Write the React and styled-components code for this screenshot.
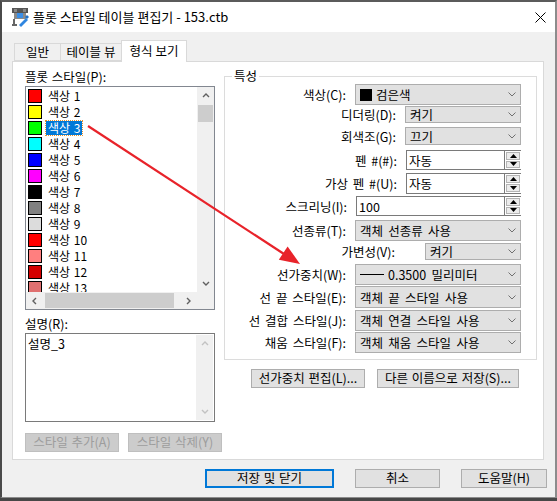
import React from 'react';
import styled, { createGlobalStyle } from 'styled-components';

const GlobalStyle = createGlobalStyle`
  body {
    margin: 0;
    background: #474747;
    font-family: "Noto Sans CJK KR", "Noto Sans", sans-serif;
    font-size: 12px;
    color: #000;
  }
  * { box-sizing: border-box; }
`;

const Frame = styled.div`
  position: relative;
  width: 557px;
  height: 501px;
  background: #474747;
  overflow: hidden;
`;

const Window = styled.div`
  width: 557px;
  height: 498px;
  border-top: 2px solid #5b5b5b;
  border-left: 2px solid #4a4a4a;
  border-right: 2px solid #8c8c8c;
  border-bottom: 1px solid #8c8c8c;
  background: #f0f0f0;
  display: flex;
  flex-direction: column;
`;

const TitleBar = styled.div`
  height: 30px;
  background: #fff;
  display: flex;
  align-items: center;
  padding-left: 8px;
  padding-right: 9px;
`;

const TitleText = styled.div`
  margin-left: 3px;
  font-size: 13px;
  line-height: 30px;
  flex: 1;
  white-space: nowrap;
`;

const Body = styled.div`
  flex: 1;
  padding: 9px 0 0 10px;
  display: flex;
  flex-direction: column;
`;

const TabStrip = styled.div`
  display: flex;
  align-items: flex-end;
  height: 20px;
  padding-left: 2px;
  position: relative;
  z-index: 1;
`;

const Tab = styled.div`
  height: ${(p) => (p.$active ? 22 : 18)}px;
  width: ${(p) => p.$w}px;
  margin-bottom: ${(p) => (p.$active ? -1 : 0)}px;
  margin-left: ${(p) => (p.$active ? -1 : 0)}px;
  background: ${(p) => (p.$active ? '#fff' : '#f0f0f0')};
  border: 1px solid #d9d9d9;
  border-bottom: ${(p) => (p.$active ? 'none' : '1px solid #d9d9d9')};
  border-left: ${(p) => (p.$first || p.$active ? '1px solid #d9d9d9' : 'none')};
  display: flex;
  align-items: center;
  justify-content: center;
  font-size: 12.5px;
  line-height: 1;
  padding-top: ${(p) => (p.$active ? 0 : 1)}px;
`;

const Panel = styled.div`
  width: 532px;
  height: 399px;
  background: #fff;
  border: 1px solid #d9d9d9;
  display: flex;
  padding: 7px 0 0 12px;
`;

const LeftCol = styled.div`
  width: 199px;
  display: flex;
  flex-direction: column;
`;

const FieldLabel = styled.div`
  height: 17px;
  line-height: 15px;
  font-size: 12.5px;
  word-spacing: 1px;
  margin-top: ${(p) => p.$mt || 0}px;
`;

const ListBox = styled.div`
  width: 190px;
  height: 224px;
  border: 1px solid #828790;
  display: grid;
  grid-template-columns: 1fr 17px;
  grid-template-rows: 1fr 17px;
`;

const ListItems = styled.div`
  overflow: hidden;
  padding: 1px 0 0 2px;
`;

const ListRow = styled.div`
  height: 16px;
  display: flex;
  align-items: center;
`;

const Swatch = styled.span`
  width: 14px;
  height: 14px;
  border: 1px solid #000;
  background: ${(p) => p.$c};
  flex: none;
`;

const ItemText = styled.span`
  margin-left: 4px;
  padding: 0 2px;
  height: 14px;
  line-height: 14px;
  font-size: 12px;
  word-spacing: 1px;
  background: ${(p) => (p.$sel ? '#0078d7' : 'transparent')};
  color: ${(p) => (p.$sel ? '#fff' : '#000')};
  outline: ${(p) => (p.$sel ? '1px dotted #e8912c' : 'none')};
`;

const VScroll = styled.div`
  background: #f0f0f0;
  display: flex;
  flex-direction: column;
`;

const ScrollBtn = styled.div`
  width: 17px;
  height: 17px;
  display: flex;
  align-items: center;
  justify-content: center;
  flex: none;
`;

const ScrollTrack = styled.div`
  flex: 1;
  display: flex;
  flex-direction: ${(p) => (p.$h ? 'row' : 'column')};
  padding: ${(p) => (p.$h ? '0 0 0 1px' : '1px 1px 0 1px')};
`;

const Thumb = styled.div`
  background: #cdcdcd;
  ${(p) => (p.$h ? `width: 129px; margin: 1px 0 1px 1px;` : `height: 17px;`)}
`;

const HScroll = styled.div`
  background: #f0f0f0;
  display: flex;
  flex-direction: row;
`;

const Corner = styled.div`
  background: #f0f0f0;
`;

const TextArea = styled.div`
  width: 190px;
  height: 89px;
  border: 1px solid #7a7a7a;
  display: flex;
`;

const TextAreaText = styled.div`
  flex: 1;
  padding: 3px 0 0 2px;
  font-size: 12.5px;
  line-height: 14px;
`;

const DisabledScroll = styled.div`
  width: 17px;
  margin: 1px 1px 1px 0;
  background: #f0f0f0;
  display: flex;
  flex-direction: column;
  justify-content: space-between;
`;

const ButtonRow = styled.div`
  display: flex;
  gap: ${(p) => p.$gap || 9}px;
  margin-top: ${(p) => p.$mt || 0}px;
  justify-content: ${(p) => p.$justify || 'flex-start'};
  padding-right: ${(p) => p.$pr || 0}px;
`;

const Button = styled.div`
  width: ${(p) => p.$w}px;
  height: 19px;
  border: ${(p) => (p.$default ? '2px solid #0078d7' : p.$disabled ? '1px solid #bfbfbf' : '1px solid #adadad')};
  background: ${(p) => (p.$disabled ? '#cccccc' : '#e1e1e1')};
  color: ${(p) => (p.$disabled ? '#9d9d9d' : '#000')};
  font-size: 12.5px;
  word-spacing: 1px;
  display: flex;
  align-items: center;
  justify-content: center;
  line-height: 1;
  white-space: nowrap;
`;

const RightCol = styled.div`
  width: 313px;
  display: flex;
  flex-direction: column;
`;

const Group = styled.fieldset`
  margin: 0;
  padding: 1px 15px 5px 0;
  border: 1px solid #dcdcdc;
  min-width: 0;
`;

const Legend = styled.legend`
  margin-left: 7px;
  padding: 0 2px;
  font-size: 12.5px;
  line-height: 14px;
`;

const PropRow = styled.div`
  height: ${(p) => p.$h}px;
  display: flex;
  justify-content: flex-end;
  align-items: flex-start;
`;

const PropLabel = styled.div`
  height: ${(p) => p.$h}px;
  display: flex;
  align-items: center;
  margin-right: ${(p) => p.$gap}px;
  font-size: 12.5px;
  word-spacing: 2px;
  white-space: nowrap;
`;

const Combo = styled.div`
  width: ${(p) => p.$w}px;
  height: ${(p) => p.$h}px;
  border: 1px solid #adadad;
  background: #e1e1e1;
  display: flex;
  align-items: center;
  padding-left: 4px;
  padding-right: 4px;
  font-size: 12.5px;
  word-spacing: 2.5px;
  white-space: nowrap;
`;

const ComboValue = styled.div`
  flex: 1;
  display: flex;
  align-items: center;
`;

const BlackBox = styled.span`
  width: 12px;
  height: 12px;
  background: #000;
  margin-right: 4px;
`;

const WeightLine = styled.span`
  width: 24px;
  height: 1px;
  background: #000;
  margin-right: 4px;
`;

const Spin = styled.div`
  width: ${(p) => p.$w}px;
  height: ${(p) => p.$h}px;
  display: flex;
`;

const Edit = styled.div`
  flex: 1;
  border: 1px solid #7a7a7a;
  border-right: none;
  background: #fff;
  padding-left: 2px;
  display: flex;
  align-items: center;
  font-size: 12.5px;
`;

const SpinButtons = styled.div`
  width: 17px;
  display: flex;
  flex-direction: column;
  border-left: 1px solid #7a7a7a;
  border-top: 1px solid #7a7a7a;
  border-bottom: 1px solid #7a7a7a;
`;

const SpinBtn = styled.div`
  flex: 1;
  margin: 1px 1px 0 1px;
  border: 1px solid #b4b4b4;
  background: #ececec;
  display: flex;
  align-items: center;
  justify-content: center;
  &:last-child { margin-bottom: 1px; }
`;

const Footer = styled.div`
  display: flex;
  gap: 21px;
  margin-top: 9px;
  padding-left: 193px;
`;

const Overlay = styled.svg`
  position: absolute;
  left: 0;
  top: 0;
  pointer-events: none;
`;

const Chevron = ({ dir, color = '#606060', size = 8 }) => {
  const paths = {
    up: 'M1 5 L4 2 L7 5',
    down: 'M1 2 L4 5 L7 2',
    left: 'M5 1 L2 4 L5 7',
    right: 'M2 1 L5 4 L2 7',
  };
  return (
    <svg width={size} height={size} viewBox="0 0 8 8">
      <path d={paths[dir]} fill="none" stroke={color} strokeWidth="1.4" />
    </svg>
  );
};

const ComboArrow = () => (
  <svg width="8" height="5" viewBox="0 0 8 5">
    <path d="M0.5 0.5 L4 4 L7.5 0.5" fill="none" stroke="#707070" strokeWidth="1" />
  </svg>
);

const Tri = ({ up }) => (
  <svg width="7" height="4" viewBox="0 0 7 4">
    <polygon points={up ? '0,4 3.5,0 7,4' : '0,0 3.5,4 7,0'} fill="#000" />
  </svg>
);

const AppIcon = () => (
  <svg width="20" height="20" viewBox="0 0 20 20">
    <rect x="2" y="1" width="16" height="5" fill="#555" />
    <rect x="4" y="2" width="3" height="3" fill="#888" />
    <rect x="13" y="2" width="3" height="3" fill="#888" />
    <rect x="4" y="6" width="12" height="6" fill="#8a8a8a" />
    <rect x="7" y="6" width="6" height="5" fill="#3b8ee6" />
    <rect x="3" y="12" width="2" height="6" fill="#666" />
    <rect x="2" y="17" width="5" height="2" fill="#666" />
    <path d="M9 18 L16 11 L18 13 L11 20 Z" fill="#2f86e0" />
    <path d="M15 10 L17 8 L19 10 L17 12 Z" fill="#1f6fc4" />
  </svg>
);

const CloseIcon = () => (
  <svg width="11" height="11" viewBox="0 0 11 11">
    <path d="M0.5 0.5 L10.5 10.5 M10.5 0.5 L0.5 10.5" stroke="#000" strokeWidth="1" />
  </svg>
);

const styles = [
  '#ff0000', '#ffff00', '#00ff00', '#00ffff', '#0000ff', '#ff00ff', '#000000',
  '#808080', '#dcdcdc', '#ff0000', '#ff7f7f', '#d40000', '#e07070',
];

const props = [
  { label: '색상(C):', type: 'combo', left: 355, h: 21, row: 22, value: <><BlackBox />검은색</> },
  { label: '디더링(D):', type: 'combo', left: 405, h: 17, row: 21, value: '켜기' },
  { label: '회색조(G):', type: 'combo', left: 405, h: 18, row: 23, value: '끄기' },
  { label: '펜 #(#):', type: 'spin', left: 405, h: 20, row: 23, value: '자동' },
  { label: '가상 펜 #(U):', type: 'spin', left: 405, h: 21, row: 23, value: '자동' },
  { label: '스크리닝(I):', type: 'spin', left: 355, h: 20, row: 24, value: '100' },
  { label: '선종류(T):', type: 'combo', left: 355, h: 21, row: 23, value: '객체 선종류 사용' },
  { label: '가변성(V):', type: 'combo', left: 425, h: 17, row: 21, gap: 30, value: '켜기' },
  { label: '선가중치(W):', type: 'combo', left: 355, h: 21, row: 22, value: <><WeightLine />0.3500 밀리미터</> },
  { label: '선 끝 스타일(E):', type: 'combo', left: 355, h: 22, row: 24, value: '객체 끝 스타일 사용' },
  { label: '선 결합 스타일(J):', type: 'combo', left: 355, h: 21, row: 22, value: '객체 연결 스타일 사용' },
  { label: '채움 스타일(F):', type: 'combo', left: 355, h: 21, row: 22, value: '객체 채움 스타일 사용' },
];

export default function App() {
  return (
    <Frame>
      <GlobalStyle />
      <Window>
        <TitleBar>
          <AppIcon />
          <TitleText>플롯 스타일 테이블 편집기 - 153.ctb</TitleText>
          <CloseIcon />
        </TitleBar>
        <Body>
          <TabStrip>
            <Tab $w={47} $first>일반</Tab>
            <Tab $w={61}>테이블 뷰</Tab>
            <Tab $w={66} $active>형식 보기</Tab>
          </TabStrip>
          <Panel>
            <LeftCol>
              <FieldLabel>플롯 스타일(P):</FieldLabel>
              <ListBox>
                <ListItems>
                  {styles.map((c, i) => (
                    <ListRow key={i}>
                      <Swatch $c={c} />
                      <ItemText $sel={i === 2}>색상 {i + 1}</ItemText>
                    </ListRow>
                  ))}
                </ListItems>
                <VScroll>
                  <ScrollBtn><Chevron dir="up" /></ScrollBtn>
                  <ScrollTrack>
                    <Thumb />
                  </ScrollTrack>
                  <ScrollBtn><Chevron dir="down" /></ScrollBtn>
                </VScroll>
                <HScroll>
                  <ScrollBtn><Chevron dir="left" /></ScrollBtn>
                  <ScrollTrack $h>
                    <Thumb $h />
                  </ScrollTrack>
                  <ScrollBtn><Chevron dir="right" /></ScrollBtn>
                </HScroll>
                <Corner />
              </ListBox>
              <FieldLabel $mt={6}>설명(R):</FieldLabel>
              <TextArea>
                <TextAreaText>설명_3</TextAreaText>
                <DisabledScroll>
                  <ScrollBtn><Chevron dir="up" color="#c2c2c2" /></ScrollBtn>
                  <ScrollBtn><Chevron dir="down" color="#c2c2c2" /></ScrollBtn>
                </DisabledScroll>
              </TextArea>
              <ButtonRow $mt={11} $gap={9}>
                <Button $w={94} $disabled>스타일 추가(A)</Button>
                <Button $w={94} $disabled>스타일 삭제(Y)</Button>
              </ButtonRow>
            </LeftCol>
            <RightCol>
              <Group>
                <Legend>특성</Legend>
                {props.map((p) => {
                  const w = 521 - p.left;
                  return (
                    <PropRow key={p.label} $h={p.row}>
                      <PropLabel $h={p.h} $gap={p.gap || 9}>{p.label}</PropLabel>
                      {p.type === 'combo' ? (
                        <Combo $w={w} $h={p.h}>
                          <ComboValue>{p.value}</ComboValue>
                          <ComboArrow />
                        </Combo>
                      ) : (
                        <Spin $w={w - 1} $h={p.h}>
                          <Edit>{p.value}</Edit>
                          <SpinButtons>
                            <SpinBtn><Tri up /></SpinBtn>
                            <SpinBtn><Tri /></SpinBtn>
                          </SpinButtons>
                        </Spin>
                      )}
                    </PropRow>
                  );
                })}
              </Group>
              <ButtonRow $mt={9} $gap={12} $justify="flex-end" $pr={18}>
                <Button $w={114}>선가중치 편집(L)...</Button>
                <Button $w={142}>다른 이름으로 저장(S)...</Button>
              </ButtonRow>
            </RightCol>
          </Panel>
          <Footer>
            <Button $w={129} $default>저장 및 닫기</Button>
            <Button $w={85}>취소</Button>
            <Button $w={86}>도움말(H)</Button>
          </Footer>
        </Body>
      </Window>
      <Overlay width="557" height="501">
        <line x1="88" y1="126" x2="284" y2="254" stroke="#e8232a" strokeWidth="2.2" />
        <polygon points="300,264 278.8,259.8 287.6,246.4" fill="#e8232a" />
      </Overlay>
    </Frame>
  );
}
